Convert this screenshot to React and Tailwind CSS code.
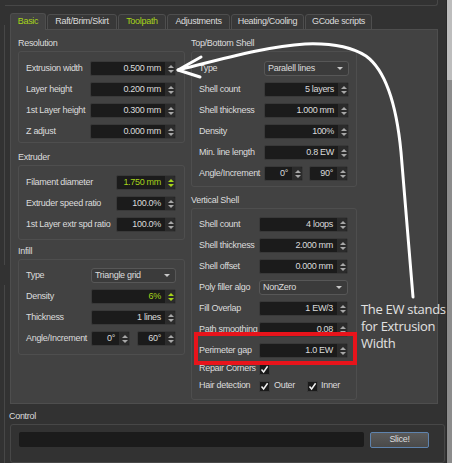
import React from 'react';

const GREEN = 'text-[#a6d41a]';

const Arrows = ({ green }) => (
  <div className="flex w-[10px] flex-col items-center justify-center gap-[2px] rounded-r-[2px] border-l border-[#2c2c2c] bg-[#2b2b2b]">
    <div className={`h-0 w-0 border-x-[3px] border-b-[3px] border-x-transparent ${green ? 'border-b-[#a6d41a]' : 'border-b-[#a8a8a8]'}`} />
    <div className={`h-0 w-0 border-x-[3px] border-t-[3px] border-x-transparent ${green ? 'border-t-[#a6d41a]' : 'border-t-[#a8a8a8]'}`} />
  </div>
);

const Spin = ({ value, w, green }) => (
  <div className={`flex h-[15px] ${w} rounded-[2px] border border-[#393939] bg-[#1b1b1b]`}>
    <div className={`flex flex-1 items-center justify-end pr-[4px] ${green ? GREEN : 'text-[#dcdcdc]'}`}>{value}</div>
    <Arrows green={green} />
  </div>
);

const Combo = ({ value, w }) => (
  <div className={`flex h-[15px] ${w} items-center justify-between rounded-[3px] border border-[#575757] bg-[#3b3b3b] pl-[3px] pr-[5px]`}>
    <span>{value}</span>
    <div className="h-0 w-0 border-x-[3px] border-t-[3px] border-x-transparent border-t-[#c8c8c8]" />
  </div>
);

const Check = () => (
  <div className="flex h-[11px] w-[11px] items-center justify-center rounded-[1px] border border-[#3c3c3c] bg-[#1a1a1a]">
    <svg width="9" height="9" viewBox="0 0 9 9">
      <path d="M1.5 4.5 L3.6 7 L7.6 1.2" fill="none" stroke="#f0f0f0" strokeWidth="1.5" />
    </svg>
  </div>
);

const Row = ({ label, lw, children }) => (
  <div className="flex h-[15px] items-center">
    <div className={`${lw} shrink-0 whitespace-nowrap`}>{label}</div>
    {children}
  </div>
);

const Group = ({ title, pad, className = '', children }) => (
  <div className={className}>
    <div className="h-[16px] leading-[16px] whitespace-nowrap">{title}</div>
    <div className={`flex flex-col gap-[6px] rounded-[3px] border border-[#4e4e4e] pl-[7px] ${pad}`}>
      {children}
    </div>
  </div>
);

const tabs = [
  { name: 'Basic', w: 'w-[36px]', green: true, active: true },
  { name: 'Raft/Brim/Skirt', w: 'w-[70px]' },
  { name: 'Toolpath', w: 'w-[48px]', green: true },
  { name: 'Adjustments', w: 'w-[63px]' },
  { name: 'Heating/Cooling', w: 'w-[73px]' },
  { name: 'GCode scripts', w: 'w-[67px]' },
];

export default function App() {
  return (
    <div className="relative flex h-[463px] w-[452px] overflow-hidden bg-[#323232] font-['Liberation_Sans',Arial,sans-serif] text-[9px] tracking-[-0.3px] text-[#dcdcdc]">
      {/* left neighbour panel */}
      <div className="flex w-[5px] shrink-0 flex-col">
        <div className="h-[25px]" />
        <div className="h-[240px] border-r border-[#474747]" />
        <div className="h-[20px]" />
        <div className="flex-1 border-r border-[#474747]" />
      </div>

      <div className="flex w-[441px] shrink-0 flex-col">
        <div className="h-[6px] w-[433px] shrink-0 rounded-br-[3px] border-r border-b border-[#474747]" />

        {/* tabs */}
        <div className="ml-[5px] mt-[7px] flex h-[17px] items-end gap-[1px]">
          {tabs.map((t) => (
            <div
              key={t.name}
              className={`${t.w} flex items-center justify-center rounded-t-[3px] border border-[#4e4e4e] ${
                t.active ? 'relative z-10 h-[17px] border-b-0 bg-[#424242]' : 'h-[16px] bg-[#383838]'
              } ${t.green ? 'text-[#a6d41a]' : ''}`}
            >
              {t.name}
            </div>
          ))}
        </div>

        {/* pane */}
        <div className="ml-[5px] -mt-px flex h-[381px] w-[428px] gap-[6px] border border-[#4e4e4e] bg-[#424242] pl-[7px] pt-[5px]">
          <div className="flex w-[167px] flex-col">
            <Group title="Resolution" pad="pt-[9px] pb-[3px]">
              <Row label="Extrusion width" lw="w-[64px]"><Spin value="0.500 mm" w="w-[86px]" /></Row>
              <Row label="Layer height" lw="w-[64px]"><Spin value="0.200 mm" w="w-[86px]" /></Row>
              <Row label="1st Layer height" lw="w-[64px]"><Spin value="0.300 mm" w="w-[86px]" /></Row>
              <Row label="Z adjust" lw="w-[64px]"><Spin value="0.000 mm" w="w-[86px]" /></Row>
            </Group>
            <Group title="Extruder" pad="pt-[9px] pb-[7px]" className="mt-[6px]">
              <Row label="Filament diameter" lw="w-[90px]"><Spin value="1.750 mm" w="w-[60px]" green /></Row>
              <Row label="Extruder speed ratio" lw="w-[90px]"><Spin value="100.0%" w="w-[60px]" /></Row>
              <Row label="1st Layer extr spd ratio" lw="w-[90px]"><Spin value="100.0%" w="w-[60px]" /></Row>
            </Group>
            <Group title="Infill" pad="pt-[8px] pb-[8px]" className="mt-[3px]">
              <Row label="Type" lw="w-[65px]"><Combo value="Triangle grid" w="w-[85px]" /></Row>
              <Row label="Density" lw="w-[65px]"><Spin value="6%" w="w-[85px]" green /></Row>
              <Row label="Thickness" lw="w-[65px]"><Spin value="1 lines" w="w-[85px]" /></Row>
              <Row label="Angle/Increment" lw="w-[65px]">
                <div className="flex gap-[7px]">
                  <Spin value="0°" w="w-[39px]" />
                  <Spin value="60°" w="w-[39px]" />
                </div>
              </Row>
            </Group>
          </div>

          <div className="flex w-[166px] flex-col">
            <Group title="Top/Bottom Shell" pad="pt-[9px] pb-[5px]">
              <Row label="Type" lw="w-[65px]"><Combo value="Paralell lines" w="w-[85px]" /></Row>
              <Row label="Shell count" lw="w-[65px]"><Spin value="5 layers" w="w-[85px]" /></Row>
              <Row label="Shell thickness" lw="w-[65px]"><Spin value="1.000 mm" w="w-[85px]" /></Row>
              <Row label="Density" lw="w-[65px]"><Spin value="100%" w="w-[85px]" /></Row>
              <Row label="Min. line length" lw="w-[65px]"><Spin value="0.8 EW" w="w-[85px]" /></Row>
              <Row label="Angle/Increment" lw="w-[65px]">
                <div className="flex gap-[6px]">
                  <Spin value="0°" w="w-[39px]" />
                  <Spin value="90°" w="w-[39px]" />
                </div>
              </Row>
            </Group>
            <Group title="Vertical Shell" pad="pt-[8px] pb-[7px]" className="mt-[5px]">
              <Row label="Shell count" lw="w-[60px]"><Spin value="4 loops" w="w-[89px]" /></Row>
              <Row label="Shell thickness" lw="w-[60px]"><Spin value="2.000 mm" w="w-[89px]" /></Row>
              <Row label="Shell offset" lw="w-[60px]"><Spin value="0.000 mm" w="w-[89px]" /></Row>
              <Row label="Poly filler algo" lw="w-[60px]"><Combo value="NonZero" w="w-[89px]" /></Row>
              <Row label="Fill Overlap" lw="w-[60px]"><Spin value="1 EW/3" w="w-[89px]" /></Row>
              <Row label="Path smoothing" lw="w-[60px]"><Spin value="0.08" w="w-[89px]" /></Row>
              <Row label="Perimeter gap" lw="w-[60px]"><Spin value="1.0 EW" w="w-[89px]" /></Row>
              <div className="-mt-px flex h-[12px] items-center">
                <div className="w-[60px] shrink-0 whitespace-nowrap">Repair Corners</div>
                <Check />
              </div>
              <div className="-mt-px flex h-[12px] items-center">
                <div className="w-[60px] shrink-0 whitespace-nowrap">Hair detection</div>
                <Check />
                <span className="ml-[4px] w-[33px]">Outer</span>
                <Check />
                <span className="ml-[3px]">Inner</span>
              </div>
            </Group>
          </div>
        </div>

        {/* control */}
        <div className="ml-[4px] mt-[4px] h-[16px] leading-[16px]">Control</div>
        <div className="ml-[5px] flex h-[40px] w-[435px] gap-[6px] rounded-[3px] border border-[#474747] pl-[8px] pt-[7px]">
          <div className="h-[15px] w-[345px] rounded-[2px] bg-[#1b1b1b]" />
          <div className="flex h-[16px] w-[59px] items-center justify-center rounded-[2px] border border-[#5f83ad] bg-gradient-to-b from-[#5a5a5a] to-[#4a4a4a]">
            Slice!
          </div>
        </div>
      </div>

      {/* scrollbar */}
      <div className="flex w-[6px] shrink-0 flex-col border-l border-[#2a2a2a]">
        <div className="h-[80px] bg-[#bdbdbd]" />
        <div className="flex-1 bg-[#8c8c8c]" />
      </div>

      {/* annotation overlay */}
      <div className="absolute left-[194px] top-[332px] h-[33px] w-[163px] border-[4px] border-[#e8141b]" />
      <div className="absolute left-[361px] top-[301px] font-['Open_Sans',sans-serif] text-[13px] leading-[17px] tracking-[-0.3px] text-[#e2e2e2]">
        The EW stands
        <br />
        for Extrusion
        <br />
        Width
      </div>
      <svg className="pointer-events-none absolute inset-0" width="452" height="463" viewBox="0 0 452 463">
        <path
          d="M413 297 L401 152 C397 110 388 72 366 56 C350 46 330 43 305 44 C270 46 230 57 178 70"
          fill="none"
          stroke="#ffffff"
          strokeWidth="3"
          strokeLinecap="round"
        />
        <path d="M201 57 L178 70 L200 77" fill="none" stroke="#ffffff" strokeWidth="3" strokeLinecap="round" strokeLinejoin="round" />
      </svg>
    </div>
  );
}
